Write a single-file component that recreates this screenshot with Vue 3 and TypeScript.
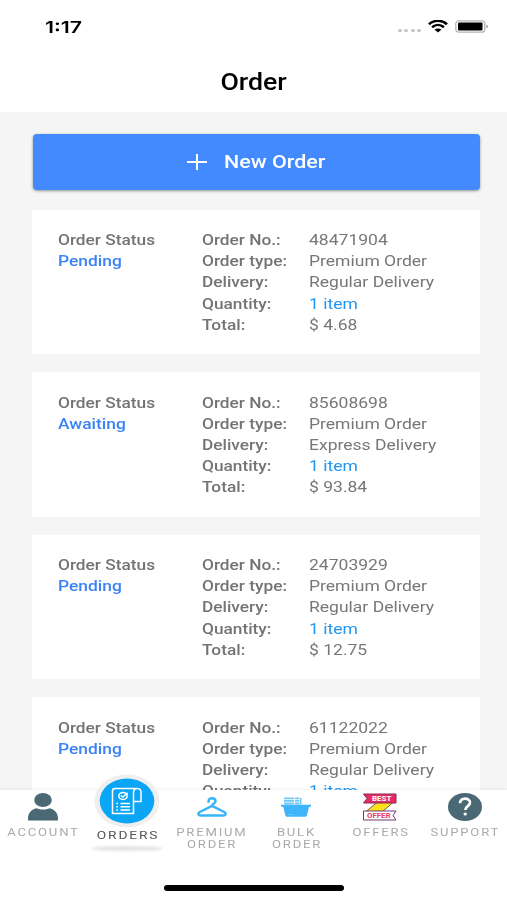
<script setup lang="ts">
interface Order {
  status: string
  number: string
  type: string
  delivery: string
  quantity: string
  total: string
}

interface NavItem {
  id: string
  lines: string[]
  active?: boolean
}

const orders: Order[] = [
  { status: 'Pending', number: '48471904', type: 'Premium Order', delivery: 'Regular Delivery', quantity: '1 item', total: '$ 4.68' },
  { status: 'Awaiting', number: '85608698', type: 'Premium Order', delivery: 'Express Delivery', quantity: '1 item', total: '$ 93.84' },
  { status: 'Pending', number: '24703929', type: 'Premium Order', delivery: 'Regular Delivery', quantity: '1 item', total: '$ 12.75' },
  { status: 'Pending', number: '61122022', type: 'Premium Order', delivery: 'Regular Delivery', quantity: '1 item', total: '' },
]

const navItems: NavItem[] = [
  { id: 'account', lines: ['ACCOUNT'] },
  { id: 'orders', lines: ['ORDERS'], active: true },
  { id: 'premium', lines: ['PREMIUM', 'ORDER'] },
  { id: 'bulk', lines: ['BULK', 'ORDER'] },
  { id: 'offers', lines: ['OFFERS'] },
  { id: 'support', lines: ['SUPPORT'] },
]
</script>

<template>
  <div class="screen">
    <header class="header">
      <div class="status-bar">
        <span class="wide clock">1:17</span>
        <div class="indicators">
          <div class="dots"><i></i><i></i><i></i><i></i></div>
          <svg class="wifi" viewBox="0 0 20 13" preserveAspectRatio="none">
            <path d="M1 4.400C6-.300 14-.300 19 4.400M4.100 7.600c3.500-3.100 8.300-3.100 11.800 0" fill="none" stroke="#000" stroke-width="2.600" />
            <path d="M6.500 10c2-1.700 5-1.700 7 0L10 13z" fill="#000" />
          </svg>
          <svg class="battery" viewBox="0 0 34 13">
            <rect x=".8" y=".8" width="29" height="11.400" rx="3" fill="#fff" stroke="#b5b5b5" stroke-width="1.300" />
            <rect x="3" y="2.500" width="24.500" height="8" rx="1" fill="#000" />
            <path d="M31.300 4.500q3.400 2 0 4z" fill="#999" />
          </svg>
        </div>
      </div>
      <h1 class="title"><span class="wide">Order</span></h1>
    </header>

    <main class="content">
      <button class="new-order" type="button">
        <svg class="plus" viewBox="0 0 20 16"><path d="M10 0v16M0 8h20" stroke="#fff" stroke-width="2" /></svg>
        <span class="wide">New Order</span>
      </button>

      <article v-for="order in orders" :key="order.number" class="card">
        <div class="column">
          <span class="wide label">Order Status</span>
          <span class="wide status">{{ order.status }}</span>
        </div>
        <div class="column">
          <span class="wide label">Order No.:</span>
          <span class="wide label">Order type:</span>
          <span class="wide label">Delivery:</span>
          <span class="wide label">Quantity:</span>
          <span v-if="order.total" class="wide label">Total:</span>
        </div>
        <div class="column values">
          <span class="wide">{{ order.number }}</span>
          <span class="wide">{{ order.type }}</span>
          <span class="wide">{{ order.delivery }}</span>
          <span class="wide link">{{ order.quantity }}</span>
          <span v-if="order.total" class="wide">{{ order.total }}</span>
        </div>
      </article>
    </main>

    <footer class="footer">
      <nav class="nav">
        <a v-for="item in navItems" :key="item.id" class="nav-item" :class="{ active: item.active }">
          <span class="icon">
            <svg v-if="item.id === 'account'" class="i-account" viewBox="0 0 30 28">
              <ellipse cx="15" cy="7" rx="8.800" ry="7" fill="#4b6875" />
              <path d="M0 27.500v-2c0-5.500 3.500-9.300 8.500-10.200 3.800 1.700 9.200 1.700 13 0 5 .900 8.500 4.700 8.500 10.200v2z" fill="#4b6875" />
            </svg>
            <svg v-else-if="item.id === 'orders'" class="i-orders" viewBox="0 0 66 54">
              <ellipse cx="33" cy="27" rx="32.500" ry="26.500" fill="#efefef" />
              <ellipse cx="33" cy="27" rx="27.300" ry="22.500" fill="#0ba5f5" />
              <g fill="none" stroke="#fff" stroke-width="1.500">
                <path d="M39.500 27.500V39.500H18.500V17c0-1.800 1-2.500 2.500-2.500H43c3 0 4 1.500 4 4V27.500H39.500V19c0-3 1.500-4.500 3.500-4.500" />
                <ellipse cx="29" cy="22" rx="4.200" ry="3.400" />
                <path d="M26.800 21.500l2 1.600 5-4.300" />
                <path d="M26.500 29.500h9.500M26.500 32.700h9.500M26.500 36h9.500M22.300 29.500h1.700M22.300 32.700h1.700M22.300 36h1.700" stroke-width="1.600" />
              </g>
            </svg>
            <svg v-else-if="item.id === 'premium'" class="i-premium" viewBox="0 0 30 20">
              <path d="M11.500 4.800C11.500 2.700 13 1.300 15 1.300s3.500 1.300 3.500 3-1.500 2.300-2.600 3c-.6.500-.8.900-.8 1.500L27.200 15c2.400 1.400 1.500 3.600-1 3.600H3.800c-2.500 0-3.400-2.200-1-3.600L15.100 8.800" fill="none" stroke="#3ab5f8" stroke-width="2.500" stroke-linejoin="round" stroke-linecap="round" />
            </svg>
            <svg v-else-if="item.id === 'bulk'" class="i-bulk" viewBox="0 0 30 20">
              <g fill="#72c8fa">
                <path d="M3 .500h10.200v1.800H3zM3 3h10.200v1.800H3zM3 5.500h10.200v2H3zM14 .500h4.500v1.800H14zM14 3h4.500v1.800H14zM14 5.500h4.500v2H14zM19 1h1.600v6.500H19z" />
              </g>
              <path d="M0 7.800h30v2h-2l-2.200 8.700q-.3 1.200-1.600 1.200H6q-1.300 0-1.600-1.200L2.200 9.800H0z" fill="#3eb5f8" />
              <path d="M7.500 17.500h1.600M10.500 17.500h1.600" stroke="#8ad4fc" />
            </svg>
            <svg v-else-if="item.id === 'offers'" class="i-offers" viewBox="0 0 36 28">
              <path d="M31 9.500L20.500 18.500H4L15 9.500z" fill="#fce21c" stroke="#765d48" />
              <path d="M1.500 1h32.500v9H1.500l3.500-4.500z" fill="#e42d62" stroke="#8c2857" />
              <path d="M34 18H1.500v9H34L31 22.500z" fill="#fff" stroke="#713875" />
              <text x="10" y="8.200" textLength="19.500" lengthAdjust="spacingAndGlyphs" fill="#fff">BEST</text>
              <text x="5" y="25.300" textLength="23.500" lengthAdjust="spacingAndGlyphs" fill="#ee3c68">OFFER</text>
            </svg>
            <svg v-else class="i-support" viewBox="0 0 34 28">
              <ellipse cx="17" cy="14" rx="17" ry="14" fill="#4b6875" />
              <path d="M12 10.300c0-3 2.200-4.600 5-4.600s5 1.600 5 4c0 3.300-4.700 3.500-4.700 7.200" fill="none" stroke="#fff" stroke-width="2.700" />
              <ellipse cx="17.200" cy="21" rx="1.700" ry="1.500" fill="#fff" />
            </svg>
          </span>
          <span v-for="line in item.lines" :key="line" class="wide nav-label">{{ line }}</span>
          <i v-if="item.active" class="active-shadow"></i>
        </a>
      </nav>
      <div class="home-indicator"></div>
    </footer>
  </div>
</template>

<style>
body {
  overflow: hidden;
}
</style>

<style scoped>
.screen {
  width: 507px;
  height: 900px;
  display: flex;
  flex-direction: column;
  overflow: hidden;
  background: #f5f5f5;
  font-family: Roboto, "Liberation Sans", sans-serif;
}

.wide {
  display: inline-block;
  white-space: nowrap;
  transform: scaleX(1.16);
}

.header {
  flex: none;
  height: 112px;
  background: #fff;
}

.status-bar {
  display: flex;
  justify-content: space-between;
  height: 52px;
  padding: 0 18px 0 45px;
}

.clock {
  font: 600 16.500px/54px Inter, sans-serif;
  transform: scaleX(1.29);
  transform-origin: left;
}

.indicators {
  display: flex;
  align-items: flex-start;
  padding-top: 20px;
}

.dots {
  display: flex;
  gap: 2.400px;
  padding-top: 8.500px;
  margin-right: 7px;
}

.dots i {
  width: 4px;
  height: 3.500px;
  border-radius: 50%;
  background: #c4c4c4;
}

.wifi {
  width: 20px;
  height: 12.500px;
  margin-right: 7px;
}

.battery {
  width: 34px;
  height: 13px;
}

.title {
  margin: 0;
  padding-left: 1px;
  text-align: center;
  font-size: 23px;
  line-height: 61px;
  font-weight: 500;
}

.content {
  flex: 1;
  min-height: 0;
  overflow: hidden;
  display: flex;
  flex-direction: column;
  gap: 18px;
  padding: 22px 27px 0 32px;
}

.new-order {
  flex: none;
  display: flex;
  align-items: center;
  height: 55.500px;
  margin: 0 0 2px 1px;
  padding: 0 0 0 154px;
  gap: 17px;
  border: 0;
  border-radius: 4px;
  background: #448aff;
  box-shadow: 0 1px 3px rgba(0, 0, 0, 0.4);
  color: #fff;
  font: 500 18.500px/20px Roboto, sans-serif;
}

.new-order .wide {
  transform-origin: left;
}

.plus {
  width: 20px;
  height: 16px;
}

.card {
  flex: none;
  box-sizing: border-box;
  display: grid;
  grid-template-columns: 144px 107.400px 1fr;
  height: 144.500px;
  padding: 20.800px 0 0 26px;
  background: #fff;
  color: #777;
  font-size: 15px;
  line-height: 21.100px;
}

.column {
  display: flex;
  flex-direction: column;
  align-items: flex-start;
}

.column .wide {
  transform-origin: left;
}

.column .label {
  transform: scaleX(1.152);
}

.values .wide {
  transform: scaleX(1.168);
}

.label {
  font-weight: 500;
  color: #747474;
}

.status {
  font-weight: 500;
  color: #3a83f7;
}

.link {
  color: #2196f3;
}

.footer {
  position: relative;
  flex: none;
  height: 110px;
  background: #fff;
  box-shadow: 0 -1px 2px rgba(0, 0, 0, 0.06);
}

.nav {
  display: grid;
  grid-template-columns: repeat(6, 1fr);
  padding: 0 0 0 1px;
  height: 95px;
}

.nav-item {
  position: relative;
  display: flex;
  flex-direction: column;
  align-items: center;
  color: #aaa;
  font-size: 11px;
  line-height: 12px;
  letter-spacing: 1.500px;
}

.nav-label {
  margin-left: 1px;
  transform: scaleX(1.19);
}

.active {
  color: #555;
}

.active .nav-label {
  transform: scaleX(1.25);
}

.icon {
  display: flex;
  align-items: center;
  justify-content: center;
  height: 33px;
  margin-bottom: 4px;
}

.active .icon {
  height: 54px;
  margin: -16px 0 2px;
}

.i-account {
  width: 30px;
  height: 28px;
}

.i-orders {
  width: 66px;
  height: 54px;
}

.i-premium,
.i-bulk {
  width: 30px;
  height: 20px;
}

.i-offers {
  width: 36px;
  height: 28px;
}

.i-offers text {
  font: 700 7px Roboto, sans-serif;
  letter-spacing: 0;
}

.i-support {
  width: 34px;
  height: 28px;
}

.active-shadow {
  width: 70px;
  height: 5px;
  margin-top: 4px;
  border-radius: 40%;
  background: #e6e6e6;
  filter: blur(1.200px);
}

.home-indicator {
  width: 180px;
  height: 5.500px;
  margin: 0 auto;
  border-radius: 3px;
  background: #000;
}
</style>
